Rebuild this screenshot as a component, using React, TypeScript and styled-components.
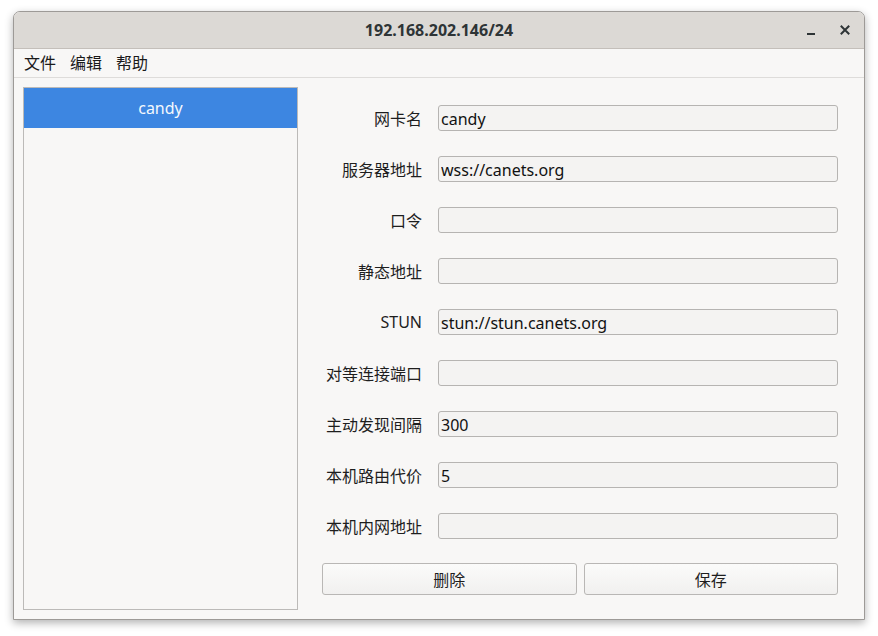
import React from "react";
import styled, { createGlobalStyle } from "styled-components";

const GlobalStyle = createGlobalStyle`
  html, body {
    margin: 0;
    padding: 0;
    background: #ffffff;
  }
  body {
    font-family: "Noto Sans", "Noto Sans CJK SC", sans-serif;
    color: #2e3436;
  }
`;

const Page = styled.div`
  padding: 11px 13px;
  width: 878px;
  height: 636px;
  box-sizing: border-box;
`;

const Window = styled.div`
  width: 852px;
  height: 609px;
  box-sizing: border-box;
  display: flex;
  flex-direction: column;
  background: #f8f7f6;
  border: 1px solid #9d9a97;
  border-radius: 7px 7px 0 0;
  box-shadow: 0 3px 9px rgba(0, 0, 0, 0.3);
  overflow: hidden;
`;

const TitleBar = styled.div`
  height: 36px;
  flex-shrink: 0;
  display: flex;
  align-items: center;
  justify-content: center;
  position: relative;
  background: #dcd9d5;
  border-bottom: 1px solid #c4bfba;
`;

const Title = styled.span`
  font-size: 16px;
  font-weight: 700;
  color: #2e3436;
`;

const WindowControls = styled.div`
  position: absolute;
  right: 12px;
  top: 0;
  bottom: 0;
  display: flex;
  align-items: center;
  gap: 20px;
`;

const ControlButton = styled.button`
  width: 14px;
  height: 14px;
  padding: 0;
  border: none;
  background: transparent;
  display: flex;
  align-items: center;
  justify-content: center;
`;

const MenuBar = styled.div`
  height: 28px;
  flex-shrink: 0;
  display: flex;
  align-items: center;
  gap: 14px;
  padding-left: 10px;
  border-bottom: 1px solid #dedcda;
  font-size: 16px;
  color: #1a1a1a;
`;

const MenuItem = styled.span`
  line-height: 28px;
`;

const Body = styled.div`
  flex: 1;
  display: flex;
  padding: 9px 26px 9px 9px;
  gap: 24px;
  min-height: 0;
`;

const ListBox = styled.div`
  width: 275px;
  box-sizing: border-box;
  border: 1px solid #bcbab8;
  background: #f8f7f6;
  display: flex;
  flex-direction: column;
`;

const ListRow = styled.div<{ $selected?: boolean }>`
  height: 40px;
  display: flex;
  align-items: center;
  justify-content: center;
  font-size: 16px;
  color: ${(p) => (p.$selected ? "#f4f8fd" : "#2e3436")};
  background: ${(p) => (p.$selected ? "#3d86e1" : "transparent")};
`;

const FormPanel = styled.div`
  flex: 1;
  display: flex;
  flex-direction: column;
  padding-top: 18px;
`;

const FieldGrid = styled.div`
  display: grid;
  grid-template-columns: 100px 1fr;
  column-gap: 16px;
  row-gap: 25px;
  align-items: center;
`;

const Label = styled.label`
  text-align: right;
  font-size: 16px;
  color: #1e1e1e;
  white-space: nowrap;
`;

const Input = styled.input`
  height: 26px;
  box-sizing: border-box;
  width: 100%;
  border: 1px solid #b6b4b2;
  border-radius: 3px;
  background: #f4f3f2;
  font-family: "Noto Sans", "Noto Sans CJK SC", sans-serif;
  font-size: 16px;
  color: #111;
  padding: 1px 2px 0;
  outline: none;
`;

const ButtonRow = styled.div`
  display: grid;
  grid-template-columns: 1fr 1fr;
  gap: 7px;
  margin-top: 24px;
`;

const Button = styled.button`
  height: 32px;
  border: 1px solid #b9b7b5;
  border-radius: 3px;
  background: linear-gradient(#fbfbfa, #f1f0ef);
  font-family: "Noto Sans", "Noto Sans CJK SC", sans-serif;
  font-size: 16px;
  color: #1e1e1e;
`;

const fields: { label: string; value: string }[] = [
  { label: "网卡名", value: "candy" },
  { label: "服务器地址", value: "wss://canets.org" },
  { label: "口令", value: "" },
  { label: "静态地址", value: "" },
  { label: "STUN", value: "stun://stun.canets.org" },
  { label: "对等连接端口", value: "" },
  { label: "主动发现间隔", value: "300" },
  { label: "本机路由代价", value: "5" },
  { label: "本机内网地址", value: "" },
];

const App = () => {
  return (
    <Page>
      <GlobalStyle />
      <Window>
        <TitleBar>
          <Title>192.168.202.146/24</Title>
          <WindowControls>
            <ControlButton aria-label="minimize">
              <svg width="10" height="12" viewBox="0 0 10 12">
                <rect x="1" y="9" width="8" height="2" fill="#2e3436" />
              </svg>
            </ControlButton>
            <ControlButton aria-label="close">
              <svg width="10" height="10" viewBox="0 0 10 10">
                <path
                  d="M1.5 1.5 L8.5 8.5 M8.5 1.5 L1.5 8.5"
                  stroke="#2e3436"
                  strokeWidth="2"
                  strokeLinecap="square"
                />
              </svg>
            </ControlButton>
          </WindowControls>
        </TitleBar>
        <MenuBar>
          <MenuItem>文件</MenuItem>
          <MenuItem>编辑</MenuItem>
          <MenuItem>帮助</MenuItem>
        </MenuBar>
        <Body>
          <ListBox>
            <ListRow $selected>candy</ListRow>
          </ListBox>
          <FormPanel>
            <FieldGrid>
              {fields.map((f) => (
                <React.Fragment key={f.label}>
                  <Label>{f.label}</Label>
                  <Input defaultValue={f.value} />
                </React.Fragment>
              ))}
            </FieldGrid>
            <ButtonRow>
              <Button>删除</Button>
              <Button>保存</Button>
            </ButtonRow>
          </FormPanel>
        </Body>
      </Window>
    </Page>
  );
};

export default App;
